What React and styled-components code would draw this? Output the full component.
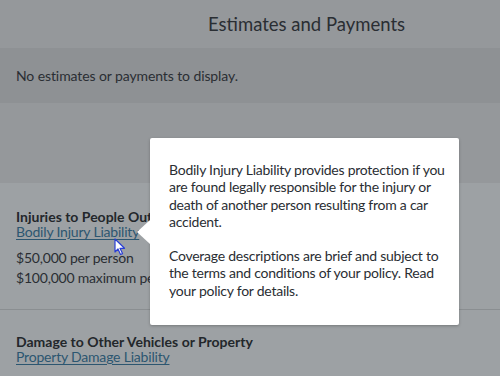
import React from 'react';
import styled, { createGlobalStyle } from 'styled-components';

const GlobalStyle = createGlobalStyle`
  html, body {
    margin: 0;
    padding: 0;
    background: #9da1a4;
  }
  body {
    font-family: Lato, "Open Sans", sans-serif;
    color: #262a2e;
    -webkit-font-smoothing: antialiased;
  }
`;

const Page = styled.div`
  width: 500px;
  height: 376px;
  overflow: hidden;
  position: relative;
  background: #9da1a4;
`;

const Header = styled.header`
  height: 48px;
  background: #95989b;
  display: flex;
  align-items: center;
  padding-left: 208px;
  box-sizing: border-box;
`;

const Title = styled.h2`
  margin: 0;
  font-size: 18.5px;
  font-weight: 400;
  color: #2a2e33;
`;

const Notice = styled.div`
  height: 55px;
  background: #8e9194;
  display: flex;
  align-items: center;
  padding: 0 16px;
  box-sizing: border-box;
  font-size: 14px;
  letter-spacing: -0.1px;
  color: #2a2e33;
`;

const Spacer = styled.div`
  height: 80px;
  background: #95989b;
`;

const Coverage = styled.section`
  position: relative;
  padding: ${p => p.$top}px 16px ${p => p.$bottom}px;
  border-bottom: ${p => (p.$divider ? '1px solid #8a8e91' : 'none')};
`;

const CoverageTitle = styled.div`
  font-size: 14px;
  font-weight: 700;
  line-height: 15px;
  color: #23272b;
  white-space: nowrap;
`;

const CoverageLink = styled.a`
  display: block;
  width: fit-content;
  font-size: 14px;
  line-height: 15px;
  letter-spacing: -0.2px;
  color: #2c5670;
  text-decoration: underline;
  text-underline-offset: 2px;
`;

const Amounts = styled.div`
  margin-top: 11px;
  display: flex;
  flex-direction: column;
  gap: 4px;
`;

const Amount = styled.div`
  font-size: 14px;
  line-height: 16px;
  letter-spacing: -0.2px;
  color: #2a2e33;
  white-space: nowrap;
`;

const Tooltip = styled.div`
  position: absolute;
  left: 150px;
  top: -45px;
  width: 309px;
  height: 187px;
  box-sizing: border-box;
  padding: 23px 14px 20px 19px;
  background: #fff;
  border-radius: 2px;
  box-shadow: 0 1px 3px rgba(0, 0, 0, 0.25);
  z-index: 5;
  &::before {
    content: '';
    position: absolute;
    left: -13px;
    top: 82px;
    width: 0;
    height: 0;
    border-top: 12px solid transparent;
    border-bottom: 12px solid transparent;
    border-right: 13px solid #fff;
  }
`;

const TipText = styled.p`
  margin: 0 0 17px;
  font-size: 14px;
  line-height: 17.3px;
  letter-spacing: -0.25px;
  color: #2a2e33;
  &:last-child {
    margin-bottom: 0;
  }
`;

const Cursor = styled.svg`
  position: absolute;
  left: 114px;
  top: 238px;
  z-index: 6;
`;

export default function App() {
  return (
    <>
      <GlobalStyle />
      <Page>
        <Header>
          <Title>Estimates and Payments</Title>
        </Header>
        <Notice>No estimates or payments to display.</Notice>
        <Spacer />
        <Coverage $top={26} $bottom={23} $divider>
          <CoverageTitle>Injuries to People Outside Your Vehicle</CoverageTitle>
          <CoverageLink href="#">Bodily Injury Liability</CoverageLink>
          <Amounts>
            <Amount>$50,000 per person</Amount>
            <Amount>$100,000 maximum per accident</Amount>
          </Amounts>
          <Tooltip>
            <TipText>
              Bodily Injury Liability provides protection if you are found
              legally responsible for the injury or death of another person
              resulting from a car accident.
            </TipText>
            <TipText>
              Coverage descriptions are brief and subject to the terms and
              conditions of your policy. Read your policy for details.
            </TipText>
          </Tooltip>
        </Coverage>
        <Coverage $top={24} $bottom={20}>
          <CoverageTitle>Damage to Other Vehicles or Property</CoverageTitle>
          <CoverageLink href="#">Property Damage Liability</CoverageLink>
        </Coverage>
        <Cursor width="12" height="18" viewBox="0 0 12 18">
          <path
            d="M1 1 L1 14 L4 11 L6.5 16.5 L8.5 15.6 L6 10.3 L10.5 10.3 Z"
            fill="#ffffff"
            stroke="#2b3fd6"
            strokeWidth="1.2"
            strokeLinejoin="round"
          />
        </Cursor>
      </Page>
    </>
  );
}
